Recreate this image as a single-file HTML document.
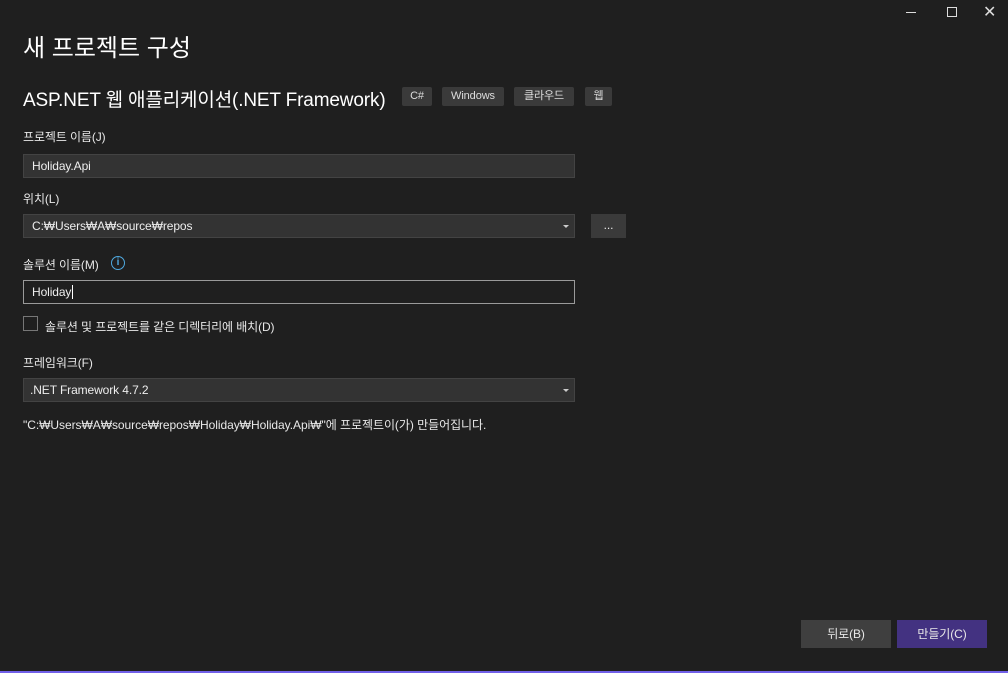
<!DOCTYPE html>
<html><head><meta charset="utf-8"><style>
*{margin:0;padding:0;box-sizing:border-box}
body{width:1008px;height:673px;background:#1f1f1f;color:#e8e8e8;font-family:"Liberation Sans","Noto Sans CJK KR",sans-serif;position:relative;overflow:hidden;font-size:12px;letter-spacing:-0.1px}
.a{position:absolute}
.box{position:absolute;background:#333;border:1px solid #434343;height:24px;padding-left:8px;line-height:22px;font-size:12px;color:#eee}
.tag{position:absolute;top:87px;height:19px;background:#3a3a3a;border-radius:2px;font-size:11px;line-height:19px;text-align:center;color:#ddd}
.arr{position:absolute;right:5px;top:10px;width:0;height:0;border-left:3px solid transparent;border-right:3px solid transparent;border-top:3px solid #ccc}
.btn{position:absolute;top:620px;height:28px;width:90px;text-align:center;line-height:28px;font-size:12px}
</style></head><body>
<div class="a" style="left:906px;top:12px;width:10px;height:1px;background:#ddd"></div>
<div class="a" style="left:947px;top:7px;width:10px;height:10px;border:1px solid #ddd"></div>
<div class="a" style="left:983px;top:2px;font-size:16px;color:#ddd">✕</div>
<div class="a" style="left:23px;top:28px;font-size:24px;color:#fff;letter-spacing:0">새 프로젝트 구성</div>
<div class="a" style="left:23px;top:85px;font-size:19px;color:#fff;letter-spacing:-0.15px">ASP.NET 웹 애플리케이션(.NET Framework)</div>
<div class="tag" style="left:402px;width:30px">C#</div>
<div class="tag" style="left:442px;width:62px">Windows</div>
<div class="tag" style="left:514px;width:60px">클라우드</div>
<div class="tag" style="left:585px;width:27px">웹</div>
<div class="a" style="left:23px;top:128px">프로젝트 이름(J)</div>
<div class="box" style="left:23px;top:154px;width:552px">Holiday.Api</div>
<div class="a" style="left:23px;top:190px">위치(L)</div>
<div class="box" style="left:23px;top:214px;width:552px">C:₩Users₩A₩source₩repos<div class="arr"></div></div>
<div class="a" style="left:591px;top:214px;width:35px;height:24px;background:#3a3a3a;text-align:center;line-height:22px">...</div>
<div class="a" style="left:23px;top:256px">솔루션 이름(M)</div>
<div class="a" style="left:111px;top:256px;width:14px;height:14px;border:1.5px solid #4fa9e0;border-radius:50%;color:#4fa9e0;font-size:10px;font-weight:bold;text-align:center;line-height:11px">i</div>
<div class="box" style="left:23px;top:280px;width:552px;background:#1f1f1f;border-color:#9a9a9a">Holiday<span style="border-left:1px solid #fff;margin-left:1px"></span></div>
<div class="a" style="left:23px;top:316px;width:15px;height:15px;border:1px solid #777"></div>
<div class="a" style="left:45px;top:318px">솔루션 및 프로젝트를 같은 디렉터리에 배치(D)</div>
<div class="a" style="left:23px;top:354px">프레임워크(F)</div>
<div class="box" style="left:23px;top:378px;width:552px;padding-left:6px">.NET Framework 4.7.2<div class="arr"></div></div>
<div class="a" style="left:23px;top:416px;letter-spacing:-0.05px">"C:₩Users₩A₩source₩repos₩Holiday₩Holiday.Api₩"에 프로젝트이(가) 만들어집니다.</div>
<div class="btn" style="left:801px;background:#3f3f3f">뒤로(B)</div>
<div class="btn" style="left:897px;background:#433281">만들기(C)</div>
<div class="a" style="left:0;top:671px;width:1008px;height:2px;background:#7160e8"></div>
</body></html>
